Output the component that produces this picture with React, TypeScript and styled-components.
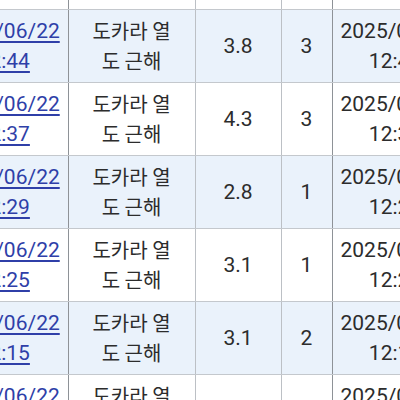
import React from "react";
import styled, { createGlobalStyle } from "styled-components";

const Global = createGlobalStyle`
  html, body { margin: 0; padding: 0; background: #ffffff; }
  body { width: 400px; height: 400px; overflow: hidden; }
`;

const Viewport = styled.div`
  width: 400px;
  height: 400px;
  overflow: hidden;
  background: #ffffff;
`;

const Table = styled.table`
  border-collapse: collapse;
  table-layout: fixed;
  width: 518px;
  margin: -64px 0 0 -60px;
  font-family: Roboto, "Noto Sans CJK KR", sans-serif;
  font-size: 21px;
  line-height: 30px;
  color: #2c2c2c;
`;

const Col = styled.col<{ $w: number }>`
  width: ${(p) => p.$w}px;
`;

const Row = styled.tr<{ $shaded: boolean }>`
  height: 73px;
  background: ${(p) => (p.$shaded ? "#eaf2fb" : "#ffffff")};
`;

const Cell = styled.td<{ $dark?: boolean; $pad?: number }>`
  box-sizing: border-box;
  height: 73px;
  padding: 6px ${(p) => p.$pad ?? 8}px;
  text-align: center;
  vertical-align: middle;
  border-top: 1px solid #c4c8cd;
  border-bottom: 1px solid #c4c8cd;
  border-right: 1px solid ${(p) => (p.$dark ? "#8e9297" : "#bcc0c5")};
`;

const Place = styled.div`
  font-family: "Noto Sans CJK KR", sans-serif;
  font-size: 20px;
  line-height: 30px;
  color: #2c2c2c;
`;

const TimeLink = styled.a`
  color: #2f3fa8;
  text-decoration: underline;
  text-underline-offset: 3px;
`;

const rows = [
  { t: "12:51", m: "2.9", i: "1" },
  { t: "12:44", m: "3.8", i: "3" },
  { t: "12:37", m: "4.3", i: "3" },
  { t: "12:29", m: "2.8", i: "1" },
  { t: "12:25", m: "3.1", i: "1" },
  { t: "12:15", m: "3.1", i: "2" },
  { t: "12:08", m: "2.7", i: "1" },
];

export default function App() {
  return (
    <Viewport>
      <Global />
      <Table>
        <colgroup>
          <Col $w={128} />
          <Col $w={127} />
          <Col $w={86} />
          <Col $w={51} />
          <Col $w={126} />
        </colgroup>
        <tbody>
          {rows.map((r, idx) => (
            <Row key={idx} $shaded={idx % 2 === 1}>
              <Cell $dark>
                <TimeLink href="#">2025/06/22 {r.t}</TimeLink>
              </Cell>
              <Cell $pad={22}>
                <Place>도카라 열도 근해</Place>
              </Cell>
              <Cell>{r.m}</Cell>
              <Cell $dark>{r.i}</Cell>
              <Cell>2025/06/22 {r.t}</Cell>
            </Row>
          ))}
        </tbody>
      </Table>
    </Viewport>
  );
}
